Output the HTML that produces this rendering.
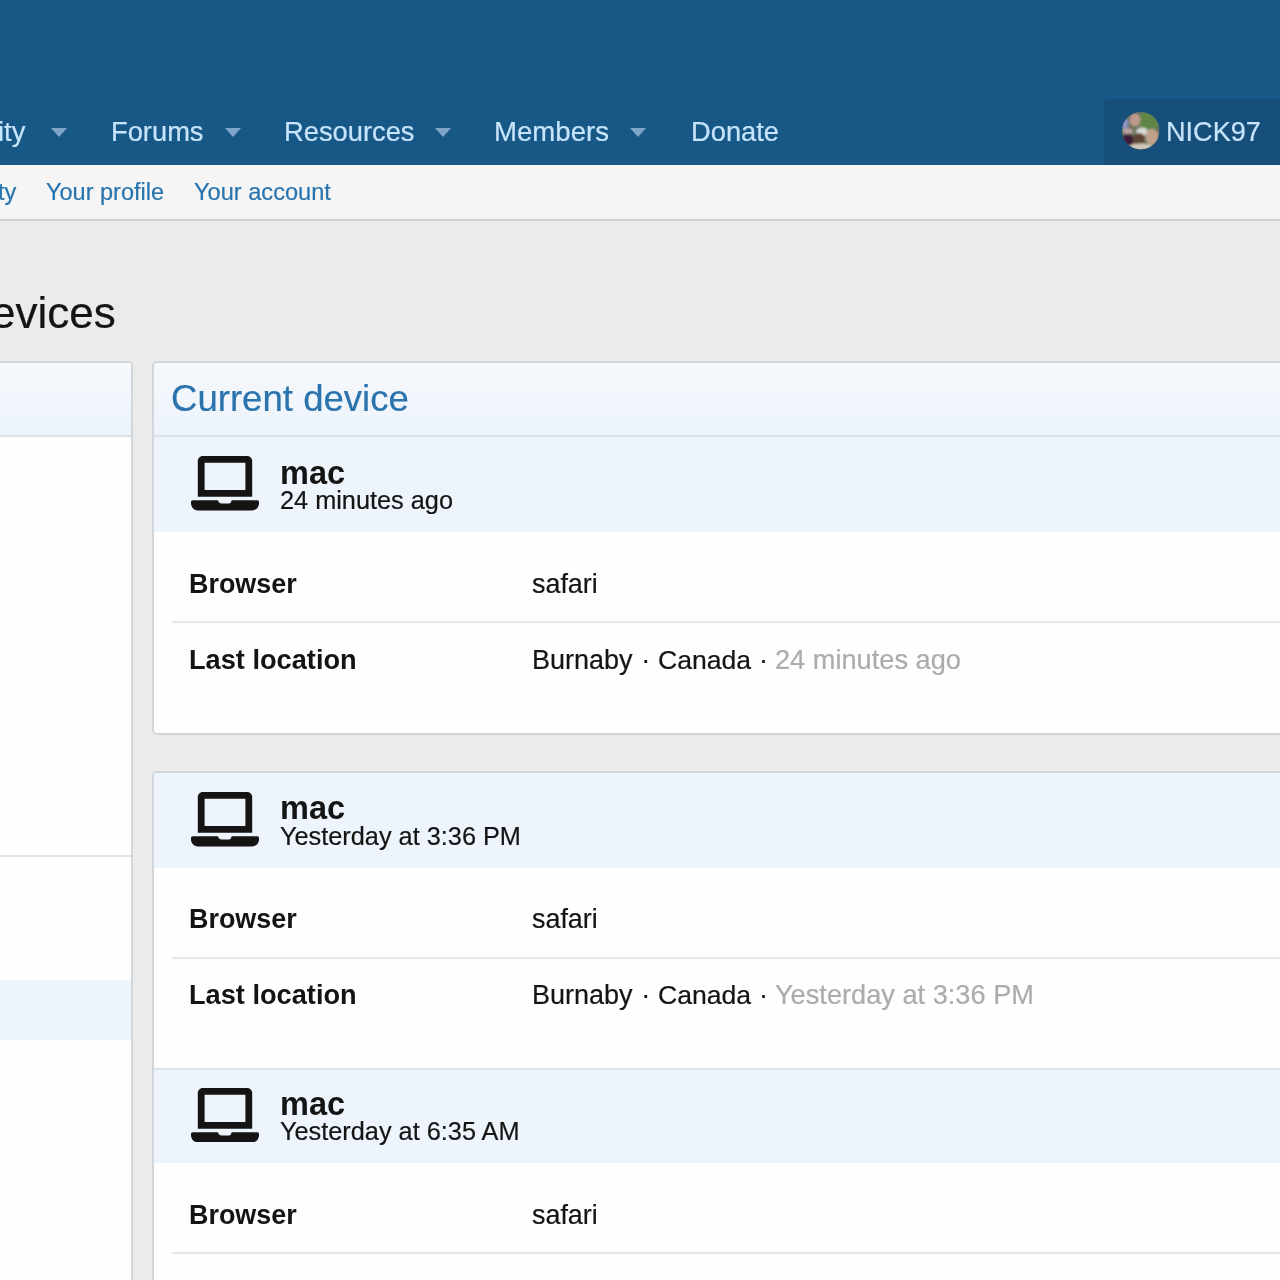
<!DOCTYPE html><html><head><meta charset="utf-8"><style>
*{margin:0;padding:0;box-sizing:border-box}
html,body{width:1280px;height:1280px;overflow:hidden;background:#ebebeb;font-family:"Liberation Sans",sans-serif}
.t{position:absolute;white-space:nowrap;will-change:transform;-webkit-text-stroke:0.2px currentColor}
.tb{-webkit-text-stroke:0}
.hdr{position:absolute;left:0;top:0;width:1280px;height:165px;background:#185886}
.arr{position:absolute;display:block}
.tab{position:absolute;left:1104px;top:99px;width:200px;height:66px;background:#164f79;border-radius:4px 0 0 0}
.sub{position:absolute;left:0;top:165px;width:1280px;height:56px;background:#f5f5f5;border-bottom:2px solid #cfcfcf}
.lblk{position:absolute;left:-20px;top:361px;width:153px;height:1000px;background:#fefefe;border:2px solid #d3d6d9;border-radius:5px;overflow:hidden}
.lhdr{position:absolute;left:0;top:0;right:0;height:73.6px;background:linear-gradient(#f6f9fd,#ecf3fb);border-bottom:2px solid #dbe0e5}
.lline{position:absolute;left:0;right:0;top:492px;height:2px;background:#e2e2e2}
.lsel{position:absolute;left:0;right:0;top:617px;height:59.5px;background:#edf4fc}
.rblk{position:absolute;left:151.5px;width:1200px;background:#fefefe;border:2px solid #d3d6d9;border-radius:5px;overflow:hidden}
.rhdr{position:absolute;left:0;top:0;right:0;height:73.6px;background:linear-gradient(#f6f9fd,#ecf3fb);border-bottom:2px solid #dbe0e5}
.drow{position:absolute;left:153.5px;width:1200px;height:96px;background:#edf4fc}
.lap{position:absolute;display:block}
.sep{position:absolute;left:171.5px;width:1200px;height:2px;background:#e6e6e6}
.ibrd{position:absolute;left:153.5px;width:1200px;height:2px;background:#dde2e7}


</style></head><body><div class="hdr"></div>
<div class="t" style="left:-2.00px;top:118.14px;font-size:27.3px;line-height:27.3px;color:#c6e4fb;font-weight:normal;">ity</div>
<svg class="arr" style="left:51px;top:128px" width="16" height="9" viewBox="0 0 16 9" preserveAspectRatio="none"><path d="M0 0H16L8 9Z" fill="#7fa5c8"/></svg>
<div class="t" style="left:111.00px;top:118.14px;font-size:27.3px;line-height:27.3px;color:#c6e4fb;font-weight:normal;">Forums</div>
<svg class="arr" style="left:224.5px;top:128px" width="16.0" height="9" viewBox="0 0 16 9" preserveAspectRatio="none"><path d="M0 0H16L8 9Z" fill="#7fa5c8"/></svg>
<div class="t" style="left:284.00px;top:118.14px;font-size:27.3px;line-height:27.3px;color:#c6e4fb;font-weight:normal;">Resources</div>
<svg class="arr" style="left:435px;top:128px" width="16" height="9" viewBox="0 0 16 9" preserveAspectRatio="none"><path d="M0 0H16L8 9Z" fill="#7fa5c8"/></svg>
<div class="t" style="left:494.30px;top:117.88px;font-size:27.6px;line-height:27.6px;color:#c6e4fb;font-weight:normal;">Members</div>
<svg class="arr" style="left:630px;top:128px" width="16" height="9" viewBox="0 0 16 9" preserveAspectRatio="none"><path d="M0 0H16L8 9Z" fill="#7fa5c8"/></svg>
<div class="t" style="left:690.80px;top:118.14px;font-size:27.3px;line-height:27.3px;color:#c6e4fb;font-weight:normal;">Donate</div>
<div class="tab"></div>
<svg style="position:absolute;left:1122.4px;top:112.25px" width="37.5" height="37.5" viewBox="0 0 37.5 37.5"><defs><clipPath id="avc"><circle cx="18.75" cy="18.75" r="18.75"/></clipPath><filter id="avb" x="-20%" y="-20%" width="140%" height="140%"><feGaussianBlur stdDeviation="1.3"/></filter></defs><g clip-path="url(#avc)"><rect width="37.5" height="37.5" fill="#6a7560"/><g filter="url(#avb)"><ellipse cx="27" cy="9" rx="11" ry="9" fill="#5f8646"/><ellipse cx="13" cy="8" rx="5.5" ry="6.5" fill="#bf9a8c"/><ellipse cx="3" cy="12" rx="3.5" ry="6" fill="#8a92c4"/><ellipse cx="6" cy="19" rx="5" ry="2.5" fill="#c8a4a2"/><ellipse cx="6" cy="28" rx="6" ry="6" fill="#3e1a3a"/><ellipse cx="20" cy="19.5" rx="6" ry="4" fill="#d8dbd8"/><ellipse cx="17" cy="27" rx="6" ry="6" fill="#5e4536"/><ellipse cx="30" cy="25" rx="6.5" ry="8" fill="#c2a28b"/><ellipse cx="19" cy="35" rx="12" ry="3.5" fill="#d2c6ba"/></g></g></svg>
<div class="t" style="left:1166.00px;top:118.30px;font-size:27.1px;line-height:27.1px;color:#c6e4fb;font-weight:normal;">NICK97</div>
<div class="sub"></div>
<div class="t" style="left:-2.00px;top:181.32px;font-size:23.6px;line-height:23.6px;color:#2874ae;font-weight:normal;">ty</div>
<div class="t" style="left:46.00px;top:181.40px;font-size:23.5px;line-height:23.5px;color:#2874ae;font-weight:normal;">Your profile</div>
<div class="t" style="left:193.50px;top:181.32px;font-size:23.6px;line-height:23.6px;color:#2874ae;font-weight:normal;">Your account</div>
<div class="t" style="left:-9.00px;top:290.95px;font-size:44px;line-height:44px;color:#141414;font-weight:normal;">evices</div>
<div class="lblk"><div class="lhdr"></div><div class="lline"></div><div class="lsel"></div></div>
<div class="rblk" style="top:361px;height:374px"><div class="rhdr"></div></div>
<div class="t" style="left:170.50px;top:380.81px;font-size:36.6px;line-height:36.6px;color:#2a73ad;font-weight:normal;">Current device</div>
<div class="drow" style="top:437.00px;height:94.75px"></div>
<svg class="lap" style="left:191px;top:456.25px" width="68" height="54.4" viewBox="0 0 640 512"><path fill="#141414" d="M624 416H381.54c-.74 19.81-14.71 32-32.74 32H288c-18.69 0-33.02-17.47-32.77-32H16c-8.8 0-16 7.2-16 16v16c0 35.2 28.8 64 64 64h512c35.2 0 64-28.8 64-64v-16c0-8.8-7.2-16-16-16zM576 48c0-26.4-21.6-48-48-48H112C85.6 0 64 21.6 64 48v336h512V48zm-64 272H128V64h384v256z"/></svg>
<div class="t tb" style="left:280.00px;top:456.53px;font-size:32.5px;line-height:32.5px;color:#141414;font-weight:bold;">mac</div>
<div class="t" style="left:280.00px;top:487.63px;font-size:25.3px;line-height:25.3px;color:#141414;font-weight:normal;">24 minutes ago</div>
<div class="t tb" style="left:189.00px;top:571.47px;font-size:26.9px;line-height:26.9px;color:#141414;font-weight:bold;">Browser</div>
<div class="t" style="left:532.00px;top:571.47px;font-size:26.9px;line-height:26.9px;color:#141414;font-weight:normal;">safari</div>
<div class="sep" style="top:620.55px"></div>
<div class="t tb" style="left:189.00px;top:646.22px;font-size:27.2px;line-height:27.2px;color:#141414;font-weight:bold;">Last location</div>
<div class="t" style="left:532.00px;top:646.39px;font-size:27px;line-height:27px;color:#141414;font-weight:normal;"><span style="display:inline-block;width:109.3px">Burnaby</span><span style="display:inline-block;width:16.7px">·</span><span style="display:inline-block;width:101px;font-size:26.6px">Canada</span><span style="display:inline-block;width:16px">·</span><span style="color:#acacac;font-size:27.2px">24 minutes ago</span></div>
<div class="rblk" style="top:771.2px;height:600px"></div>
<div class="drow" style="top:772.95px;height:94.75px"></div>
<svg class="lap" style="left:191px;top:792.2px" width="68" height="54.4" viewBox="0 0 640 512"><path fill="#141414" d="M624 416H381.54c-.74 19.81-14.71 32-32.74 32H288c-18.69 0-33.02-17.47-32.77-32H16c-8.8 0-16 7.2-16 16v16c0 35.2 28.8 64 64 64h512c35.2 0 64-28.8 64-64v-16c0-8.8-7.2-16-16-16zM576 48c0-26.4-21.6-48-48-48H112C85.6 0 64 21.6 64 48v336h512V48zm-64 272H128V64h384v256z"/></svg>
<div class="t tb" style="left:280.00px;top:792.48px;font-size:32.5px;line-height:32.5px;color:#141414;font-weight:bold;">mac</div>
<div class="t" style="left:280.00px;top:823.58px;font-size:25.3px;line-height:25.3px;color:#141414;font-weight:normal;">Yesterday at 3:36 PM</div>
<div class="t tb" style="left:189.00px;top:906.12px;font-size:26.9px;line-height:26.9px;color:#141414;font-weight:bold;">Browser</div>
<div class="t" style="left:532.00px;top:906.12px;font-size:26.9px;line-height:26.9px;color:#141414;font-weight:normal;">safari</div>
<div class="sep" style="top:956.50px"></div>
<div class="t tb" style="left:189.00px;top:981.17px;font-size:27.2px;line-height:27.2px;color:#141414;font-weight:bold;">Last location</div>
<div class="t" style="left:532.00px;top:981.34px;font-size:27px;line-height:27px;color:#141414;font-weight:normal;"><span style="display:inline-block;width:109.3px">Burnaby</span><span style="display:inline-block;width:16.7px">·</span><span style="display:inline-block;width:101px;font-size:26.6px">Canada</span><span style="display:inline-block;width:16px">·</span><span style="color:#acacac;font-size:27.2px">Yesterday at 3:36 PM</span></div>
<div class="drow" style="top:1068.25px;height:94.75px"></div>
<svg class="lap" style="left:191px;top:1087.5px" width="68" height="54.4" viewBox="0 0 640 512"><path fill="#141414" d="M624 416H381.54c-.74 19.81-14.71 32-32.74 32H288c-18.69 0-33.02-17.47-32.77-32H16c-8.8 0-16 7.2-16 16v16c0 35.2 28.8 64 64 64h512c35.2 0 64-28.8 64-64v-16c0-8.8-7.2-16-16-16zM576 48c0-26.4-21.6-48-48-48H112C85.6 0 64 21.6 64 48v336h512V48zm-64 272H128V64h384v256z"/></svg>
<div class="t tb" style="left:280.00px;top:1087.78px;font-size:32.5px;line-height:32.5px;color:#141414;font-weight:bold;">mac</div>
<div class="t" style="left:280.00px;top:1118.88px;font-size:25.3px;line-height:25.3px;color:#141414;font-weight:normal;">Yesterday at 6:35 AM</div>
<div class="t tb" style="left:189.00px;top:1201.72px;font-size:26.9px;line-height:26.9px;color:#141414;font-weight:bold;">Browser</div>
<div class="t" style="left:532.00px;top:1201.72px;font-size:26.9px;line-height:26.9px;color:#141414;font-weight:normal;">safari</div>
<div class="sep" style="top:1251.80px"></div>
<div class="t tb" style="left:189.00px;top:1277.47px;font-size:27.2px;line-height:27.2px;color:#141414;font-weight:bold;">Last location</div>
<div class="t" style="left:532.00px;top:1277.64px;font-size:27px;line-height:27px;color:#141414;font-weight:normal;"><span style="display:inline-block;width:109.3px">Burnaby</span><span style="display:inline-block;width:16.7px">·</span><span style="display:inline-block;width:101px;font-size:26.6px">Canada</span><span style="display:inline-block;width:16px">·</span><span style="color:#acacac;font-size:27.2px">Yesterday at 6:35 AM</span></div>
<div class="ibrd" style="top:1067.6px"></div></body></html>
